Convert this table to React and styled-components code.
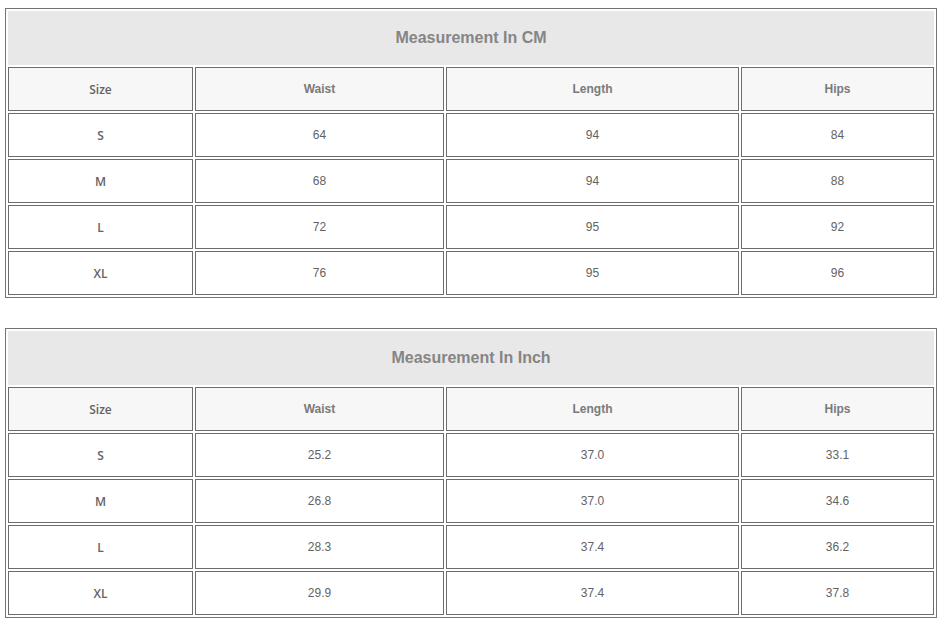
import React from 'react';
import styled, { createGlobalStyle } from 'styled-components';

const GlobalStyle = createGlobalStyle`
  body {
    margin: 0;
    background: #ffffff;
    font-family: "Liberation Sans", Arial, sans-serif;
  }
`;

const Page = styled.div`
  padding: 8px 5px;
  display: flex;
  flex-direction: column;
  gap: 30px;
`;

const Table = styled.div`
  box-sizing: border-box;
  width: 932px;
  border: 1px solid #747474;
  padding: 2px;
  display: grid;
  grid-template-columns: 185px 249px 293px 193px;
  grid-template-rows: 54px;
  grid-auto-rows: 44px;
  gap: 2px;
`;

const Title = styled.div`
  grid-column: 1 / -1;
  background: #e8e8e8;
  display: flex;
  align-items: center;
  justify-content: center;
  font-size: 16px;
  font-weight: bold;
  color: #858585;
`;

const Cell = styled.div`
  box-sizing: border-box;
  border: 1px solid #6c6c6c;
  background: ${(p) => (p.$head ? '#f7f7f7' : '#ffffff')};
  display: flex;
  align-items: center;
  justify-content: center;
  font-family: ${(p) => (p.$first ? '"Open Sans", "Liberation Sans", sans-serif' : '"Liberation Sans", Arial, sans-serif')};
  font-size: 12px;
  font-weight: ${(p) => (p.$first ? 600 : p.$head ? 'bold' : 'normal')};
  color: ${(p) => (p.$head && !p.$first ? '#7a7a7a' : '#636363')};
`;

const headers = ['Size', 'Waist', 'Length', 'Hips'];

const tables = [
  {
    title: 'Measurement In CM',
    rows: [
      ['S', '64', '94', '84'],
      ['M', '68', '94', '88'],
      ['L', '72', '95', '92'],
      ['XL', '76', '95', '96'],
    ],
  },
  {
    title: 'Measurement In Inch',
    rows: [
      ['S', '25.2', '37.0', '33.1'],
      ['M', '26.8', '37.0', '34.6'],
      ['L', '28.3', '37.4', '36.2'],
      ['XL', '29.9', '37.4', '37.8'],
    ],
  },
];

function SizeTable({ title, rows }) {
  return (
    <Table>
      <Title>{title}</Title>
      {headers.map((h, i) => (
        <Cell key={h} $head $first={i === 0}>{h}</Cell>
      ))}
      {rows.map((row) =>
        row.map((v, i) => (
          <Cell key={row[0] + i} $first={i === 0}>{v}</Cell>
        ))
      )}
    </Table>
  );
}

export default function App() {
  return (
    <>
      <GlobalStyle />
      <Page>
        {tables.map((t) => (
          <SizeTable key={t.title} title={t.title} rows={t.rows} />
        ))}
      </Page>
    </>
  );
}
